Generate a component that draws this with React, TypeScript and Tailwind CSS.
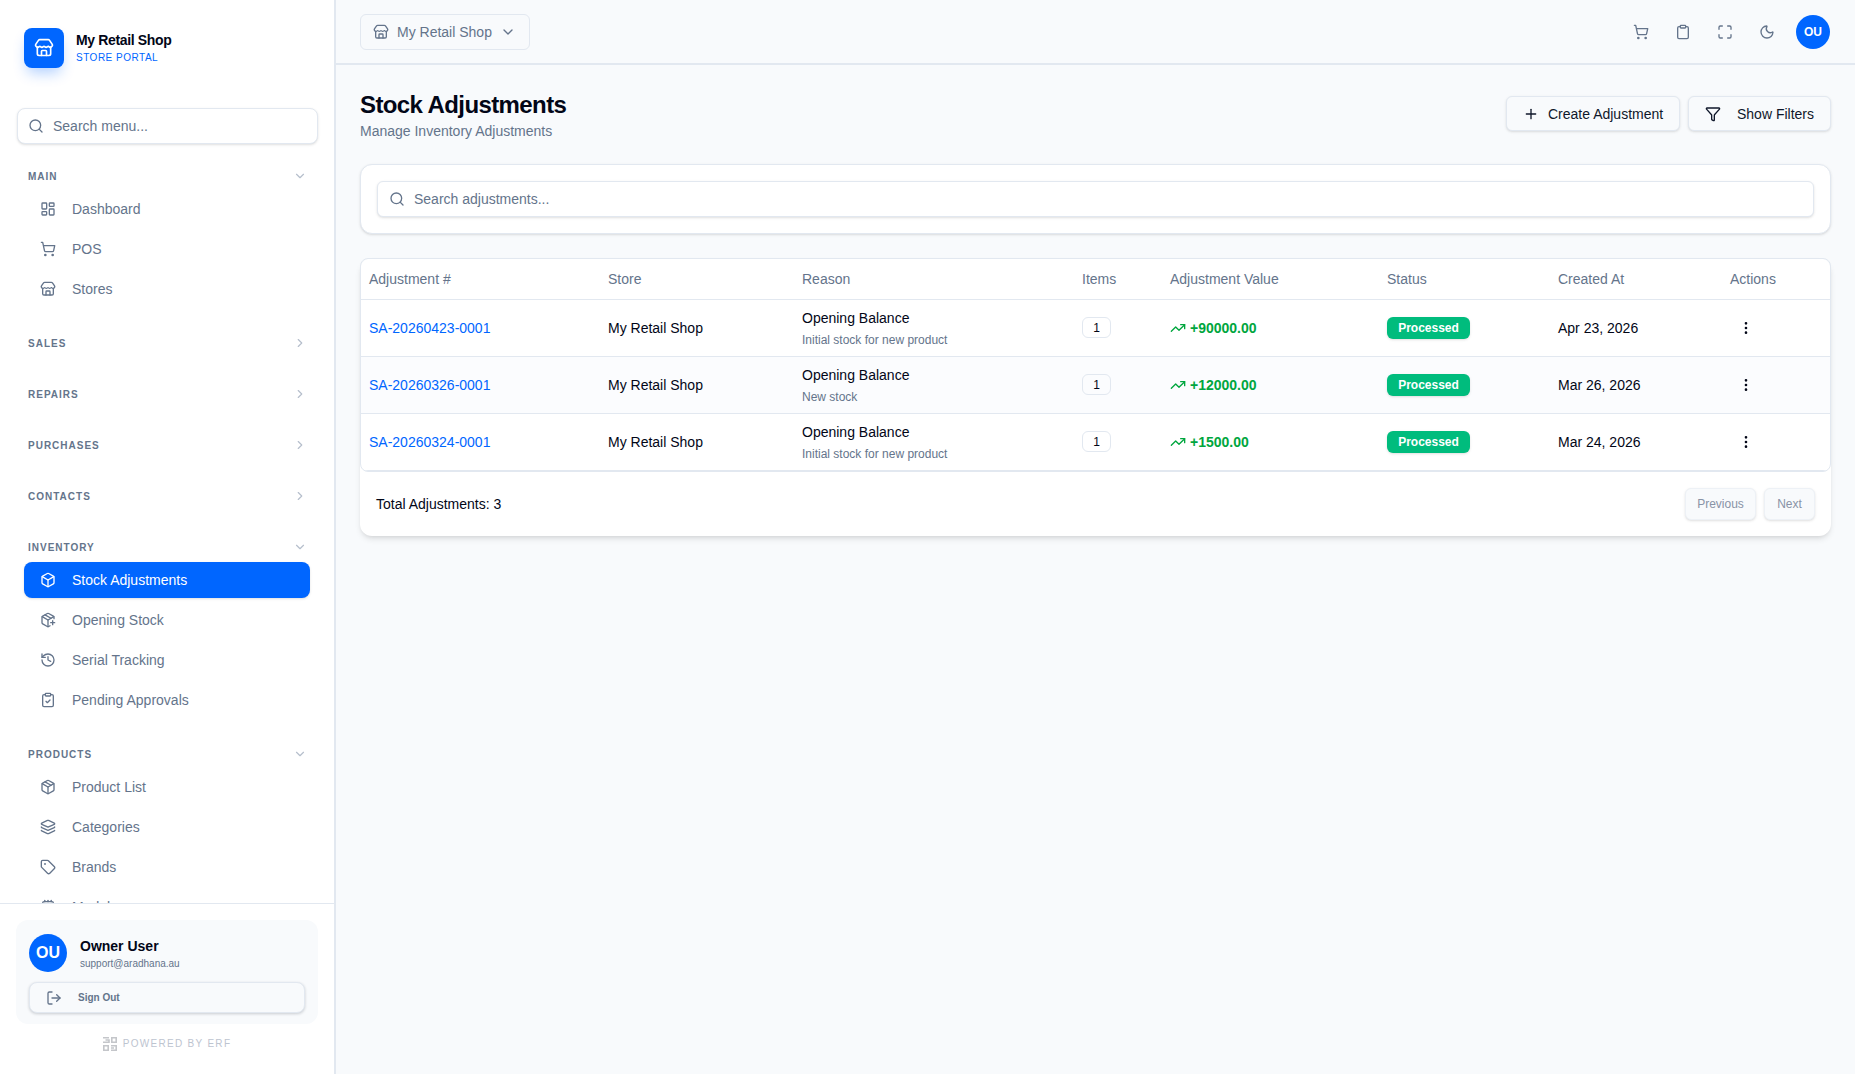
import {
  Box,
  ChevronDown,
  ChevronRight,
  Clipboard,
  ClipboardCheck,
  Cpu,
  EllipsisVertical,
  Funnel,
  History,
  Layers,
  LayoutDashboard,
  LogOut,
  Maximize,
  Moon,
  Package,
  PackagePlus,
  Plus,
  Search,
  ShoppingCart,
  Store,
  Tag,
  TrendingUp,
} from "lucide-react";
import type { LucideIcon } from "lucide-react";

interface NavItem { label: string; icon: LucideIcon; active?: boolean; }
interface NavSection { title: string; items?: NavItem[]; }

const SECTIONS: NavSection[] = [
  {
    title: "MAIN",
    items: [
      { label: "Dashboard", icon: LayoutDashboard },
      { label: "POS", icon: ShoppingCart },
      { label: "Stores", icon: Store },
    ],
  },
  { title: "SALES" },
  { title: "REPAIRS" },
  { title: "PURCHASES" },
  { title: "CONTACTS" },
  {
    title: "INVENTORY",
    items: [
      { label: "Stock Adjustments", icon: Box, active: true },
      { label: "Opening Stock", icon: PackagePlus },
      { label: "Serial Tracking", icon: History },
      { label: "Pending Approvals", icon: ClipboardCheck },
    ],
  },
  {
    title: "PRODUCTS",
    items: [
      { label: "Product List", icon: Package },
      { label: "Categories", icon: Layers },
      { label: "Brands", icon: Tag },
      { label: "Models", icon: Cpu },
    ],
  },
];

const ROWS = [
  { id: "SA-20260423-0001", note: "Initial stock for new product", value: "+90000.00", date: "Apr 23, 2026" },
  { id: "SA-20260326-0001", note: "New stock", value: "+12000.00", date: "Mar 26, 2026" },
  { id: "SA-20260324-0001", note: "Initial stock for new product", value: "+1500.00", date: "Mar 24, 2026" },
];

function Sidebar() {
  return (
    <aside className="flex h-full w-[336px] shrink-0 flex-col border-r-2 border-[#e2e8f0] bg-white">
      <div className="flex items-center gap-3 pl-6 pt-7">
        <div className="flex h-10 w-10 items-center justify-center rounded-lg bg-[#0066ff] text-white shadow-[0_8px_14px_-3px_rgba(0,102,255,0.3)]">
          <Store size={20} />
        </div>
        <div className="-mt-[2px]">
          <div className="text-sm leading-5 font-bold tracking-tight text-[#020617]">My Retail Shop</div>
          <div className="mt-[1px] text-[10px] leading-[14px] tracking-[0.05em] text-[#0066ff]">STORE PORTAL</div>
        </div>
      </div>

      <div className="ml-[17px] mr-[16px] mt-[40px] flex h-[36px] items-center gap-[9px] rounded-lg border border-[#e2e8f0] bg-white pl-[10px] text-sm text-[#64748b] shadow-sm">
        <Search size={16} />
        <span>Search menu...</span>
      </div>

      <nav className="mt-[17px] min-h-0 flex-1 overflow-hidden">
        {SECTIONS.map((section) => (
          <div key={section.title} className="mb-[21px]">
            <div className="flex h-[30px] items-center justify-between pl-7 pr-[27px]">
              <span className="text-[10px] font-bold tracking-[0.1em] text-[#64748b]">{section.title}</span>
              {section.items ? (
                <ChevronDown size={14} className="text-[#b6bfcc]" />
              ) : (
                <ChevronRight size={14} className="text-[#b6bfcc]" />
              )}
            </div>
            {section.items && (
              <div className="mx-6 flex flex-col gap-1">
                {section.items.map((item) => (
                  <div
                    key={item.label}
                    className={
                      item.active
                        ? "flex h-9 items-center gap-4 rounded-lg bg-[#0066ff] px-4 text-sm text-white shadow-sm"
                        : "flex h-9 items-center gap-4 rounded-lg px-4 text-sm text-[#64748b]"
                    }
                  >
                    <item.icon size={16} />
                    <span>{item.label}</span>
                  </div>
                ))}
              </div>
            )}
          </div>
        ))}
      </nav>

      <div className="h-[171px] shrink-0 border-t border-[#e2e8f0] bg-white px-4 pt-4">
        <div className="h-[104px] rounded-xl bg-[#f8fafc] px-[13px] pt-[14px]">
          <div className="flex items-center gap-[13px]">
            <div className="flex h-[38px] w-[38px] items-center justify-center rounded-full bg-[#0066ff] text-base font-bold text-white">OU</div>
            <div>
              <div className="text-sm leading-5 font-bold text-[#020617]">Owner User</div>
              <div className="mt-[1px] text-[10px] leading-[14px] text-[#64748b]">support@aradhana.au</div>
            </div>
          </div>
          <div className="mt-[10px] flex h-[31px] items-center gap-[16px] rounded-lg border border-[#e2e8f0] bg-[#f8fafc] pl-4 text-[10px] font-bold text-[#64748b] shadow-[0_1px_3px_rgba(15,23,42,0.2)]">
            <LogOut size={16} />
            <span>Sign Out</span>
          </div>
        </div>
        <div className="mt-[12px] flex items-center justify-center gap-[6px] text-[10px] tracking-[0.13em] text-[#bdc4d0]">
          <svg width="14" height="14" viewBox="0 0 14 14" fill="none" stroke="#c4c6ca" strokeWidth="1.6">
            <path d="M0 .8h6M0 5.2h6V3H2.5M8.8.8h4.4v4.4H8.8zM.8 8.8h4.4v4.4H.8zM8 8.8h5.2v4.4H8M8 11h3" />
          </svg>
          <span>POWERED BY ERF</span>
        </div>
      </div>
    </aside>
  );
}

function TopBar() {
  return (
    <header className="flex h-[65px] shrink-0 items-center justify-between border-b-2 border-[#e2e8f0] bg-[#f8fafc] pl-6 pr-[25px]">
      <div className="flex h-9 items-center rounded-md border border-[#e2e8f0] pl-[12px] pr-[13px] text-sm text-[#64748b]">
        <Store size={16} />
        <span className="ml-[8px]">My Retail Shop</span>
        <ChevronDown size={16} className="ml-[8px]" />
      </div>
      <div className="flex items-center text-[#64748b]">
        <ShoppingCart size={16} className="mr-[26px]" />
        <Clipboard size={16} className="mr-[26px]" />
        <Maximize size={16} className="mr-[26px]" />
        <Moon size={16} className="mr-[21px]" />
        <div className="flex h-[34px] w-[34px] items-center justify-center rounded-full bg-[#0066ff] text-xs font-bold text-white">OU</div>
      </div>
    </header>
  );
}

function AdjustmentsTable() {
  return (
    <table className="w-full table-fixed border-collapse text-sm">
      <colgroup>
        <col className="w-[239px]" />
        <col className="w-[194px]" />
        <col className="w-[280px]" />
        <col className="w-[88px]" />
        <col className="w-[217px]" />
        <col className="w-[171px]" />
        <col className="w-[172px]" />
        <col />
      </colgroup>
      <thead>
        <tr className="h-[40px] border-b border-[#e2e8f0] text-left text-[#64748b]">
          {["Adjustment #", "Store", "Reason", "Items", "Adjustment Value", "Status", "Created At", "Actions"].map((h) => (
            <th key={h} className="px-2 font-normal">{h}</th>
          ))}
        </tr>
      </thead>
      <tbody>
        {ROWS.map((row, i) => (
          <tr key={row.id} className={i === 1 ? "h-[57px] border-b border-[#e2e8f0] bg-[#fbfcfe]" : "h-[57px] border-b border-[#e2e8f0]"}>
            <td className="px-2 text-[#0066ff]">{row.id}</td>
            <td className="px-2 text-[#020617]">My Retail Shop</td>
            <td className="px-2">
              <div className="leading-5 text-[#020617]">Opening Balance</div>
              <div className="mt-[4px] text-xs leading-4 text-[#64748b]">{row.note}</div>
            </td>
            <td className="px-2">
              <span className="flex h-[21px] w-[29px] items-center justify-center rounded-md border border-[#e2e8f0] text-xs text-[#020617]">1</span>
            </td>
            <td className="px-2">
              <div className="flex items-center gap-1 font-bold text-[#00a63e]">
                <TrendingUp size={16} />
                <span>{row.value}</span>
              </div>
            </td>
            <td className="px-2">
              <span className="inline-flex h-[22px] w-[83px] items-center justify-center rounded-md bg-[#00bc7d] text-xs font-bold text-white shadow-sm">Processed</span>
            </td>
            <td className="px-2 text-[#020617]">{row.date}</td>
            <td className="px-2">
              <EllipsisVertical size={16} className="ml-[8px] text-[#020617]" />
            </td>
          </tr>
        ))}
      </tbody>
    </table>
  );
}

export default function App() {
  return (
    <div className="flex h-screen w-screen overflow-hidden bg-[#f8fafc] font-['Liberation_Sans',Arial,sans-serif]">
      <Sidebar />
      <div className="flex min-w-0 flex-1 flex-col">
        <TopBar />
        <main className="flex-1 pl-6 pr-[24px] pt-[24px]">
          <div className="flex items-start justify-between">
            <div>
              <h1 className="text-2xl leading-8 font-bold tracking-tight text-[#020617]">Stock Adjustments</h1>
              <p className="text-sm leading-5 text-[#64748b]">Manage Inventory Adjustments</p>
            </div>
            <div className="mt-[7px] flex gap-[8px] text-sm text-[#0f172a]">
              <div className="flex h-[35px] w-[174px] items-center gap-[9px] rounded-md border border-[#e2e8f0] bg-[#f8fafc] pl-[16px] shadow-sm">
                <Plus size={16} />
                <span>Create Adjustment</span>
              </div>
              <div className="flex h-[35px] w-[143px] items-center gap-[16px] rounded-md border border-[#e2e8f0] bg-[#f8fafc] pl-[16px] shadow-sm">
                <Funnel size={16} />
                <span>Show Filters</span>
              </div>
            </div>
          </div>

          <div className="mt-[23px] rounded-xl border border-[#e2e8f0] bg-white px-4 py-4 shadow-sm">
            <div className="flex h-9 items-center gap-[9px] rounded-md border border-[#e2e8f0] bg-white pl-[11px] text-sm text-[#64748b] shadow-sm">
              <Search size={16} />
              <span>Search adjustments...</span>
            </div>
          </div>

          <div className="mt-6 rounded-xl bg-white shadow-md">
            <div className="overflow-hidden rounded-lg border border-[#e2e8f0]">
              <AdjustmentsTable />
            </div>
            <div className="flex h-[64px] items-center justify-between px-4">
              <span className="text-sm text-[#020617]">Total Adjustments: 3</span>
              <div className="flex gap-2 text-xs text-[#8893a6]">
                <div className="flex h-8 w-[71px] items-center justify-center rounded-md border border-[#edf1f6] bg-[#f8fafc] shadow-sm">Previous</div>
                <div className="flex h-8 w-[51px] items-center justify-center rounded-md border border-[#edf1f6] bg-[#f8fafc] shadow-sm">Next</div>
              </div>
            </div>
          </div>
        </main>
      </div>
    </div>
  );
}
